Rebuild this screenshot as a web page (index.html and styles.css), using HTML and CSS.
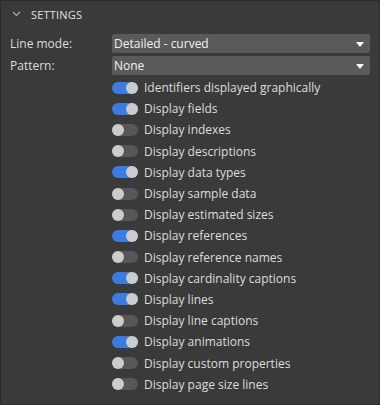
FILE: index.html
```html
<!DOCTYPE html>
<html lang="en">
<head>
    <meta charset="UTF-8">
    <title>Settings</title>
    <link rel="stylesheet" href="styles.css">
</head>
<body>
    <div class="panel">
        <div class="panel-header">
            <svg class="chevron" width="9" height="6" viewBox="0 0 9 6">
                <polyline points="1,1 4.5,4.5 8,1" fill="none" stroke="#aaa" stroke-width="1.2"/>
            </svg>
            <span>SETTINGS</span>
        </div>
        <div class="panel-body">
            <div class="field">
                <label>Line mode:</label>
                <div class="select">Detailed - curved<span class="caret"></span></div>
            </div>
            <div class="field">
                <label>Pattern:</label>
                <div class="select">None<span class="caret"></span></div>
            </div>
            <div class="toggles">
                <div class="toggle on"><span class="switch"></span>Identifiers displayed graphically</div>
                <div class="toggle on"><span class="switch"></span>Display fields</div>
                <div class="toggle"><span class="switch"></span>Display indexes</div>
                <div class="toggle"><span class="switch"></span>Display descriptions</div>
                <div class="toggle on"><span class="switch"></span>Display data types</div>
                <div class="toggle"><span class="switch"></span>Display sample data</div>
                <div class="toggle"><span class="switch"></span>Display estimated sizes</div>
                <div class="toggle on"><span class="switch"></span>Display references</div>
                <div class="toggle"><span class="switch"></span>Display reference names</div>
                <div class="toggle on"><span class="switch"></span>Display cardinality captions</div>
                <div class="toggle on"><span class="switch"></span>Display lines</div>
                <div class="toggle"><span class="switch"></span>Display line captions</div>
                <div class="toggle on"><span class="switch"></span>Display animations</div>
                <div class="toggle"><span class="switch"></span>Display custom properties</div>
                <div class="toggle"><span class="switch"></span>Display page size lines</div>
            </div>
        </div>
    </div>
</body>
</html>
```

FILE: styles.css
```css
html, body {
    margin: 0;
    padding: 0;
    background-color: #2b2b2b;
}

body {
    font-family: "Open Sans", sans-serif;
    color: #dddddd;
}

.panel {
    width: 380px;
    height: 405px;
    box-sizing: border-box;
    background-color: #3a3a3a;
    border: 1px solid #2c2c2c;
}

.panel-header {
    display: flex;
    align-items: center;
    height: 26px;
    padding-left: 11px;
    font-size: 11px;
    letter-spacing: 0.2px;
    color: #e0e0e0;
}

.chevron {
    margin-right: 10px;
}

.panel-body {
    padding: 5px 9px 0 9px;
}

.field {
    display: grid;
    grid-template-columns: 102px 1fr;
    align-items: center;
    height: 22px;
    font-size: 12px;
}

.select {
    position: relative;
    height: 19px;
    line-height: 19px;
    padding-left: 2px;
    background-color: #5a5a5a;
    border-radius: 2px;
    color: #f0f0f0;
}

.caret {
    position: absolute;
    right: 6px;
    top: 8px;
    width: 0;
    height: 0;
    border-left: 4px solid transparent;
    border-right: 4px solid transparent;
    border-top: 5px solid #ffffff;
}

.toggles {
    padding-left: 102px;
    padding-top: 1px;
}

.toggle {
    display: flex;
    align-items: center;
    height: 21.2px;
    font-size: 12px;
}

.switch {
    position: relative;
    width: 26px;
    height: 12px;
    border-radius: 6px;
    background-color: #575757;
    margin-right: 6px;
    flex-shrink: 0;
}

.switch::after {
    content: "";
    position: absolute;
    left: 0;
    top: 0;
    width: 12px;
    height: 12px;
    border-radius: 50%;
    background-color: #cccccc;
}

.toggle.on .switch {
    background-color: #3e7be0;
}

.toggle.on .switch::after {
    left: 14px;
}
```
